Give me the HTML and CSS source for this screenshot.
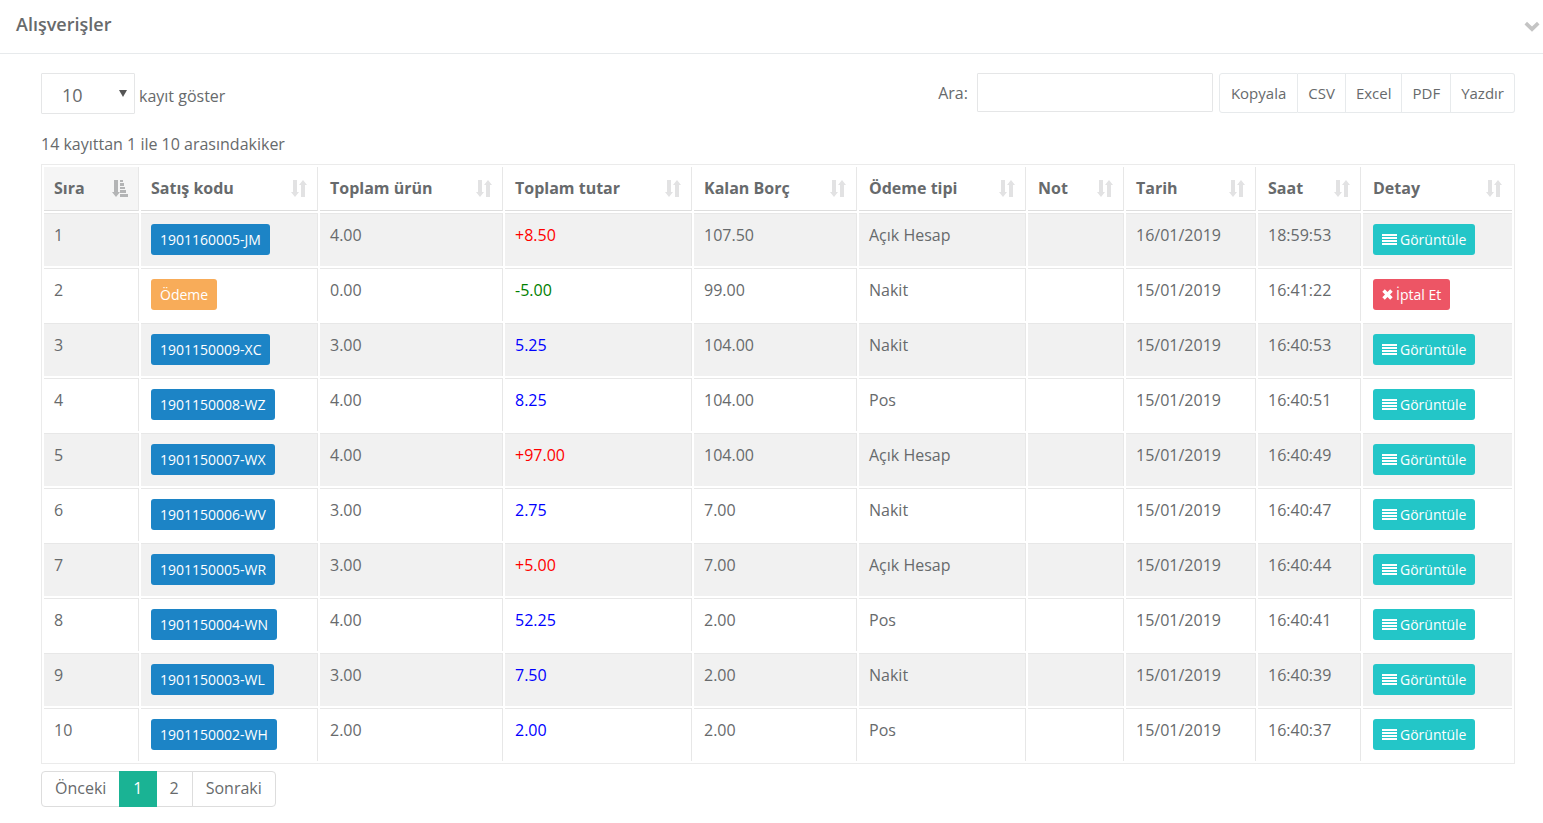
FILE: index.html
```html
<!DOCTYPE html>
<html lang="tr">
<head>
  <meta charset="UTF-8">
  <meta name="viewport" content="width=device-width, initial-scale=1.0">
  <title>Alışverişler</title>
  <link rel="stylesheet" href="styles.css">
</head>
<body>

<!-- Icons -->
<svg class="sprite" aria-hidden="true">
  <symbol id="icon-sort" viewBox="0 0 17 18">
    <path d="M3 0h4v12h2L5 17 1 12h2zM11 17V5H9L13 0l4 5h-2v12z"/>
  </symbol>
  <symbol id="icon-sort-asc" viewBox="0 0 17 18">
    <path d="M3 0h4v12h2L5 17 1 12h2zM9 0h3v2H9zM9 3h4v3H9zM9 7h5v2H9zM9 10h6v3H9zM9 14h8v3H9z"/>
  </symbol>
  <symbol id="icon-list" viewBox="0 0 15 11">
    <path d="M0 0h15v2H0zM0 3h15v2H0zM0 6h15v2H0zM0 9h15v2H0z"/>
  </symbol>
  <symbol id="icon-times" viewBox="0 0 11 11">
    <path d="M2.800 .3L5.500 3 8.200 .3l2.500 2.500L8 5.500l2.700 2.700-2.500 2.500L5.500 8l-2.700 2.700L.3 8.200 3 5.500 .3 2.800z"/>
  </symbol>
  <symbol id="icon-chevron" viewBox="0 0 16 11">
    <path d="M3 .8L8 5.400 13 .8l2.500 2.700L8 10.800 .5 3.500z"/>
  </symbol>
</svg>

<div class="ibox">
  <div class="ibox-title">
    <h5>Alışverişler</h5>
    <a href="#" class="collapse-link" aria-label="Daralt"><svg><use href="#icon-chevron"/></svg></a>
  </div>

  <div class="ibox-content">
    <div class="toolbar">
      <label class="length">
        <span class="select-wrap">
          <select>
            <option>10</option>
            <option>25</option>
            <option>50</option>
            <option>100</option>
          </select>
        </span>
        kayıt göster
      </label>
      <div class="tools">
        <label class="search">Ara: <input type="search"></label>
        <div class="btn-group">
          <button type="button">Kopyala</button>
          <button type="button">CSV</button>
          <button type="button">Excel</button>
          <button type="button">PDF</button>
          <button type="button">Yazdır</button>
        </div>
      </div>
    </div>

    <div class="info">14 kayıttan 1 ile 10 arasındakiker</div>

    <table class="sales">
      <colgroup>
        <col class="c-no"><col class="c-code"><col class="c-count"><col class="c-total"><col class="c-debt">
        <col class="c-type"><col class="c-note"><col class="c-date"><col class="c-time"><col class="c-detail">
      </colgroup>
      <thead>
        <tr>
          <th class="sorted"><div>Sıra<svg><use href="#icon-sort-asc"/></svg></div></th>
          <th><div>Satış kodu<svg><use href="#icon-sort"/></svg></div></th>
          <th><div>Toplam ürün<svg><use href="#icon-sort"/></svg></div></th>
          <th><div>Toplam tutar<svg><use href="#icon-sort"/></svg></div></th>
          <th><div>Kalan Borç<svg><use href="#icon-sort"/></svg></div></th>
          <th><div>Ödeme tipi<svg><use href="#icon-sort"/></svg></div></th>
          <th><div>Not<svg><use href="#icon-sort"/></svg></div></th>
          <th><div>Tarih<svg><use href="#icon-sort"/></svg></div></th>
          <th><div>Saat<svg><use href="#icon-sort"/></svg></div></th>
          <th><div>Detay<svg><use href="#icon-sort"/></svg></div></th>
        </tr>
      </thead>
      <tbody id="salesData"></tbody>
    </table>

    <nav class="pagination">
      <a href="#">Önceki</a>
      <a href="#" class="active">1</a>
      <a href="#">2</a>
      <a href="#">Sonraki</a>
    </nav>
  </div>
</div>

<script>
  // code, item count, total, remaining debt, payment type, date, time
  const sales = [
    ["1901160005-JM", "4.00", "+8.50", "107.50", "Açık Hesap", "16/01/2019", "18:59:53"],
    ["Ödeme", "0.00", "-5.00", "99.00", "Nakit", "15/01/2019", "16:41:22"],
    ["1901150009-XC", "3.00", "5.25", "104.00", "Nakit", "15/01/2019", "16:40:53"],
    ["1901150008-WZ", "4.00", "8.25", "104.00", "Pos", "15/01/2019", "16:40:51"],
    ["1901150007-WX", "4.00", "+97.00", "104.00", "Açık Hesap", "15/01/2019", "16:40:49"],
    ["1901150006-WV", "3.00", "2.75", "7.00", "Nakit", "15/01/2019", "16:40:47"],
    ["1901150005-WR", "3.00", "+5.00", "7.00", "Açık Hesap", "15/01/2019", "16:40:44"],
    ["1901150004-WN", "4.00", "52.25", "2.00", "Pos", "15/01/2019", "16:40:41"],
    ["1901150003-WL", "3.00", "7.50", "2.00", "Nakit", "15/01/2019", "16:40:39"],
    ["1901150002-WH", "2.00", "2.00", "2.00", "Pos", "15/01/2019", "16:40:37"]
  ];

  // Debt is red, payment is green, the rest is blue
  function totalClass(total) {
    if (total[0] === "+") return "debt";
    if (total[0] === "-") return "paid";
    return "cash";
  }

  const salesData = document.getElementById("salesData");
  sales.forEach(([code, count, total, debt, type, date, time], i) => {
    const payment = code === "Ödeme";
    const row = document.createElement("tr");
    row.innerHTML = `
      <td>${i + 1}</td>
      <td><a href="#" class="btn ${payment ? "btn-warning" : "btn-success"}">${code}</a></td>
      <td>${count}</td>
      <td class="${totalClass(total)}">${total}</td>
      <td>${debt}</td>
      <td>${type}</td>
      <td></td>
      <td>${date}</td>
      <td>${time}</td>
      <td>${payment
        ? '<button type="button" class="btn btn-danger"><svg class="times"><use href="#icon-times"/></svg>İptal Et</button>'
        : '<button type="button" class="btn btn-info"><svg class="list"><use href="#icon-list"/></svg>Görüntüle</button>'}</td>`;
    salesData.appendChild(row);
  });
</script>

</body>
</html>
```
FILE: styles.css
```css
* { box-sizing: border-box; }
body { margin: 0; font-family: "Open Sans", Arial, sans-serif; font-size: 16px; line-height: 23px; color: #676a6c; background-color: #fff; }
a { color: inherit; text-decoration: none; }
input, select, button { font-family: inherit; color: inherit; }
svg { fill: currentColor; }
.sprite { display: none; }

/* Title bar */
.ibox-title { display: flex; align-items: center; justify-content: space-between; height: 54px; padding: 0 3px 4px 16px; border-bottom: 1px solid #e7eaec; }
.ibox-title h5 { margin: 0; font-size: 18px; font-weight: 600; }
.collapse-link { padding-top: 4px; color: #c4c4c4; }
.collapse-link svg { display: block; width: 16px; height: 11px; }
.ibox-content { padding: 19px 28px 16px 41px; }

/* Controls above the table */
.toolbar { display: flex; align-items: flex-start; justify-content: space-between; }
.length { display: flex; gap: 4px; height: 41px; line-height: 46px; }
.select-wrap { position: relative; display: block; }
.select-wrap::after { content: ""; position: absolute; right: 8px; top: 17px; border: 4px solid transparent; border-top: 7px solid #555; border-bottom: 0; pointer-events: none; }
.select-wrap select { display: block; width: 94px; height: 41px; padding: 2px 20px 0; font-size: 18px; border: 1px solid #e5e6e7; border-radius: 1px; background-color: #fff; appearance: none; }
.tools { display: flex; align-items: flex-start; gap: 6px; }
.search { display: flex; gap: 9px; line-height: 41px; }
.search input { width: 236px; height: 39px; padding: 6px 12px; font-size: 16px; border: 1px solid #e5e6e7; border-radius: 1px; background-color: #fff; appearance: none; }
.btn-group { display: flex; }
.btn-group button { height: 40px; margin: 0; padding: 0 10px; font-size: 15px; border: 1px solid #e7eaec; border-left: 0; background-color: #fff; cursor: pointer; }
.btn-group button:first-child { padding: 0 11px; border-left: 1px solid #e7eaec; border-radius: 3px 0 0 3px; }
.btn-group button:last-child { border-radius: 0 3px 3px 0; }
.info { padding: 19px 0 8px; }

/* Sales table */
.sales { width: 100%; table-layout: fixed; border: 1px solid #ebebeb; border-collapse: separate; border-spacing: 2px; }
.sales th, .sales td { padding: 10px; text-align: left; vertical-align: top; border-right: 1px solid #e7e7e7; }
.sales th:last-child, .sales td:last-child { border-right: 0; }
.sales th { border-bottom: 1px solid #ddd; font-weight: bold; white-space: nowrap; }
.sales th div { display: flex; align-items: center; justify-content: space-between; }
.sales th svg { width: 17px; height: 18px; color: #e2e2e3; }
.sales th.sorted { background-color: #f5f5f5; }
.sales th.sorted svg { color: #b3b4b5; }
.sales td { height: 53px; border-top: 1px solid #e7e7e7; }
.sales tbody tr:nth-child(odd) td { background-color: #f1f1f1; }
.sales .debt { color: red; }
.sales .paid { color: green; }
.sales .cash { color: blue; }

.c-no { width: 95px; }
.c-code { width: 177px; }
.c-count { width: 183px; }
.c-total { width: 187px; }
.c-debt { width: 163px; }
.c-type { width: 167px; }
.c-note { width: 96px; }
.c-date { width: 130px; }
.c-time { width: 103px; }
.c-detail { width: 149px; }

/* Buttons in rows */
.btn { display: inline-flex; align-items: center; gap: 3px; height: 31px; padding: 0 9px; border: 0; border-radius: 3px; font-size: 14px; line-height: 21px; color: #fff; vertical-align: top; cursor: pointer; }
.btn-success { background-color: #1c84c6; }
.btn-warning { background-color: #f8ac59; }
.btn-info { background-color: #23c6c8; }
.btn-danger { background-color: #ed5565; }
.btn .list { width: 15px; height: 11px; }
.btn .times { width: 11px; height: 11px; }

/* Pagination */
.pagination { display: flex; margin-top: 7px; }
.pagination a { height: 36px; margin-left: -1px; padding: 5px 13px; border: 1px solid #ddd; background-color: #fff; }
.pagination a:first-child { margin-left: 0; border-radius: 4px 0 0 4px; }
.pagination a:last-child { border-radius: 0 4px 4px 0; }
.pagination .active { z-index: 1; color: #fff; background-color: #1ab394; border-color: #1ab394; }
```
